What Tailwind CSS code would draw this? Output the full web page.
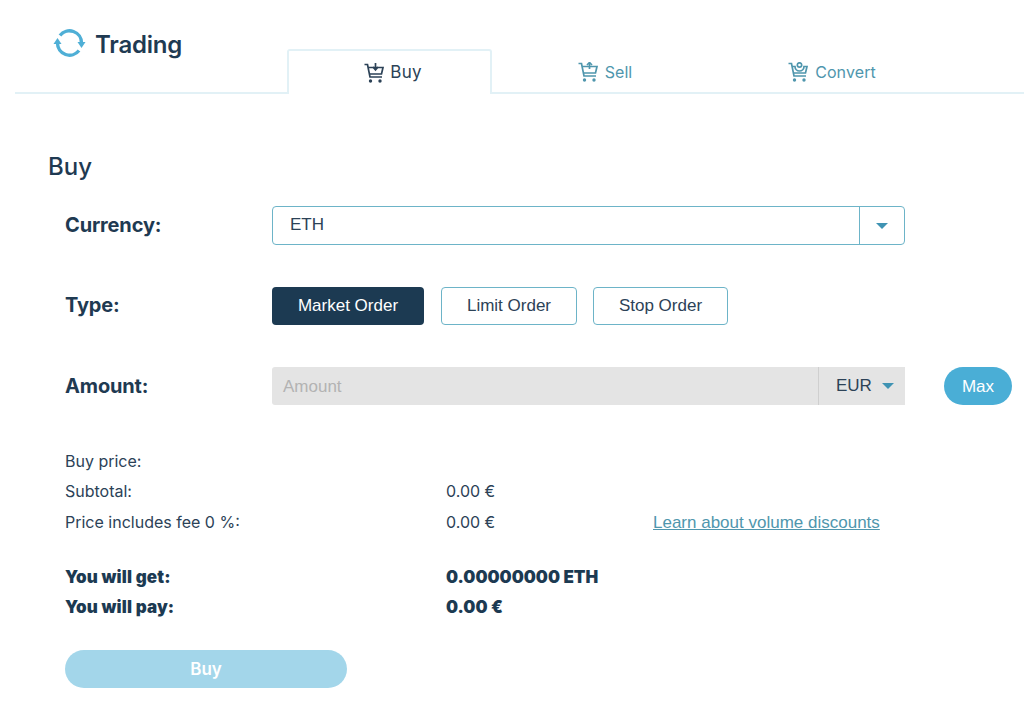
<!DOCTYPE html>
<html lang="en">
  <head>
    <meta charset="UTF-8" />
    <meta name="viewport" content="width=device-width, initial-scale=1.0" />
    <title>Trading</title>
    <script src="https://cdn.jsdelivr.net/npm/@tailwindcss/browser@4"></script>
  </head>
  <body class="bg-white text-[#1f3a52] font-['Inter',sans-serif] w-[1024px] h-[704px] overflow-hidden">

    <!-- Header + tabs -->
    <div class="ml-[15px] h-[94px] flex border-b-2 border-[#e2f1f6]">
      <div class="w-[272px] pl-[37px] pt-[27px] flex items-start gap-[9px]">
        <svg class="w-[34px] h-[34px] -mt-[1px] text-[#4fafd6]" viewBox="0 0 34 34" fill="none" stroke="currentColor" stroke-width="3.4">
          <path d="M8 9.5 A12 12 0 0 1 29.5 17" />
          <path d="M5.5 17 A12 12 0 0 0 27 24.5" />
          <path d="M1.5 18 L9.5 18 L5.5 12 Z" fill="currentColor" stroke="none" />
          <path d="M25.5 16 L33.5 16 L29.5 22 Z" fill="currentColor" stroke="none" />
        </svg>
        <span class="text-[24px] font-semibold leading-[36px] tracking-[-0.2px] text-[#1f3a52]">Trading</span>
      </div>

      <div class="w-[205px] h-[45px] mt-[49px] pl-[7px] bg-white border-2 border-b-0 border-[#e2f1f6] rounded-t-[3px] flex items-center justify-center gap-[6px] text-[17px] tracking-[0.2px] text-[#2c4257] relative z-10">
        <svg class="w-[20px] h-[20px]" viewBox="0 0 20 20" fill="none" stroke="currentColor" stroke-width="1.7">
          <path d="M0.5 1.5 H3.5 L6 14 H18" />
          <path d="M4.2 4.5 H19 L17.5 11 H5.5" />
          <path d="M11.5 0 V6" />
          <path d="M9 4 L11.5 7 L14 4" />
          <circle cx="6.5" cy="18" r="1.7" fill="currentColor" stroke="none" />
          <circle cx="16" cy="18" r="1.7" fill="currentColor" stroke="none" />
        </svg>
        Buy
      </div>

      <div class="w-[228px] h-[45px] mt-[49px] flex items-center justify-center gap-[7px] text-[16px] text-[#4f96ad] -translate-x-[1px]">
        <svg class="w-[20px] h-[20px]" viewBox="0 0 20 20" fill="none" stroke="currentColor" stroke-width="1.7">
          <path d="M0.5 1.5 H3.5 L6 14 H18" />
          <path d="M4.2 4.5 H19 L17.5 11 H5.5" />
          <path d="M11.5 1 V7" />
          <path d="M9 3 L11.5 0.5 L14 3" />
          <circle cx="6.5" cy="18" r="1.7" fill="currentColor" stroke="none" />
          <circle cx="16" cy="18" r="1.7" fill="currentColor" stroke="none" />
        </svg>
        Sell
      </div>

      <div class="w-[226px] h-[45px] mt-[49px] flex items-center justify-center gap-[7px] text-[16px] tracking-[0.1px] text-[#4f96ad] -translate-x-[1px]">
        <svg class="w-[20px] h-[20px]" viewBox="0 0 20 20" fill="none" stroke="currentColor" stroke-width="1.7">
          <path d="M0.5 1.5 H3.5 L6 14 H18" />
          <path d="M4.2 4.5 H7 A4.5 4.5 0 0 0 16 4.5 H19 L17.5 11 H5.5" />
          <circle cx="11.5" cy="3" r="2.2" />
          <circle cx="6.5" cy="18" r="1.7" fill="currentColor" stroke="none" />
          <circle cx="16" cy="18" r="1.7" fill="currentColor" stroke="none" />
        </svg>
        Convert
      </div>
    </div>

    <!-- Form -->
    <div class="pt-[56px]">
      <h1 class="ml-[48px] text-[24px] leading-[34px] font-medium">Buy</h1>

      <div class="ml-[65px] mt-[22px] flex flex-col gap-[42px] font-['Liberation_Sans',sans-serif]">
        <div class="flex items-center h-[39px]">
          <div class="w-[207px] pb-[2px] font-['Inter',sans-serif] text-[20px] font-bold tracking-[-0.15px]">Currency:</div>
          <div class="w-[633px] h-[39px] border border-[#6db4c8] rounded-[4px] flex items-center">
            <div class="flex-1 pl-[17px] pb-[2px] text-[17px] text-[#2c4257]">ETH</div>
            <div class="w-[45px] h-full border-l border-[#6db4c8] flex items-center justify-center">
              <div class="w-0 h-0 border-x-[6px] border-x-transparent border-t-[6px] border-t-[#3f93b3]"></div>
            </div>
          </div>
        </div>

        <div class="flex items-center h-[38px]">
          <div class="w-[207px] pb-[2px] font-['Inter',sans-serif] text-[20px] font-bold tracking-[-0.15px]">Type:</div>
          <div class="flex text-[17px]">
            <div class="w-[152px] mr-[17px] h-[38px] bg-[#1c3a52] text-white rounded-[4px] flex items-center justify-center">Market Order</div>
            <div class="w-[136px] mr-[16px] h-[38px] border border-[#6db4c8] text-[#2c4257] rounded-[4px] flex items-center justify-center">Limit Order</div>
            <div class="w-[135px] h-[38px] border border-[#6db4c8] text-[#2c4257] rounded-[4px] flex items-center justify-center">Stop Order</div>
          </div>
        </div>

        <div class="flex items-center h-[38px]">
          <div class="w-[207px] font-['Inter',sans-serif] text-[20px] font-bold tracking-[-0.15px]">Amount:</div>
          <div class="w-[633px] h-[38px] bg-[#e4e4e4] rounded-l-[3px] flex items-center">
            <div class="flex-1 pl-[11px] pt-[1px] text-[17px] text-[#b3b3b3]">Amount</div>
            <div class="w-[87px] h-full border-l border-[#cfcfcf] flex items-center pl-[17px] gap-[10px] text-[17px] text-[#2c4257]">
              EUR
              <div class="w-0 h-0 border-x-[6px] border-x-transparent border-t-[6px] border-t-[#3f93b3]"></div>
            </div>
          </div>
          <div class="ml-[39px] w-[68px] h-[38px] pt-[1px] rounded-full bg-[#4aaed6] text-white text-[17px] flex items-center justify-center">Max</div>
        </div>
      </div>

      <!-- Summary -->
      <div class="ml-[65px] mt-[41px] text-[16px] text-[#2c4257]">
        <div class="h-[30px] flex items-center">Buy price:</div>
        <div class="h-[29px] flex items-center">
          <span class="w-[381px]">Subtotal:</span><span>0.00 €</span>
        </div>
        <div class="mt-[2px] h-[30px] flex items-center">
          <span class="w-[381px]">Price includes fee 0 %:</span><span class="w-[207px]">0.00 €</span>
          <a class="pt-[1px] text-[17px] text-[#4f96ad] underline font-['Liberation_Sans',sans-serif]">Learn about volume discounts</a>
        </div>
        <div class="mt-[26px] h-[30px] flex items-center text-[17px] font-black text-[#1c3a52]">
          <span class="w-[381px] tracking-[0.15px]">You will get:</span><span>0.00000000 ETH</span>
        </div>
        <div class="h-[30px] flex items-center text-[17px] font-black text-[#1c3a52]">
          <span class="w-[381px] tracking-[0.15px]">You will pay:</span><span>0.00 €</span>
        </div>
      </div>

      <div class="ml-[65px] mt-[27px] w-[282px] h-[38px] pt-[1px] rounded-full bg-[#a3d6ea] text-white text-[17px] font-semibold flex items-center justify-center">Buy</div>
    </div>

  </body>
</html>
